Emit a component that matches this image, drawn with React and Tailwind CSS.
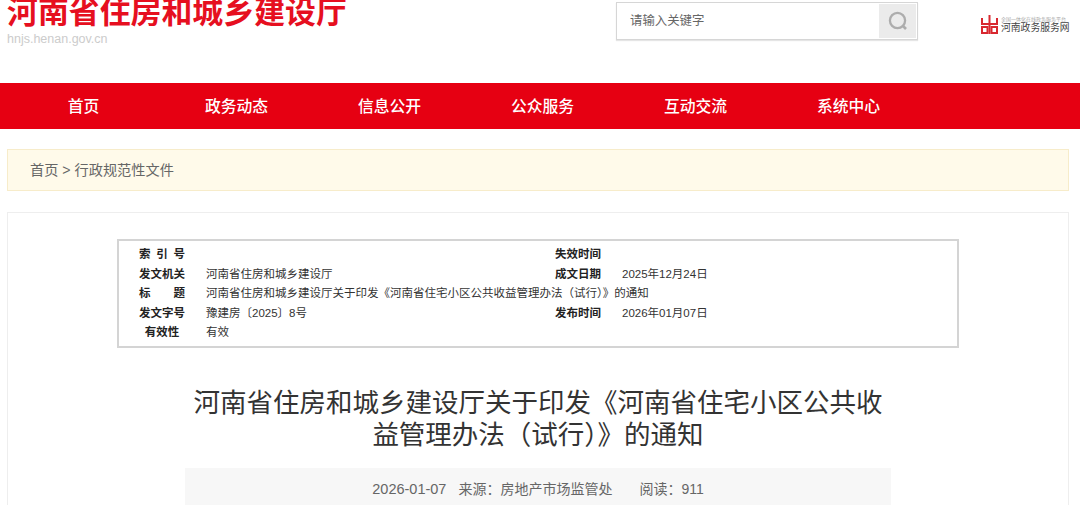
const fontStack = { fontFamily: '"Liberation Sans", "Noto Sans CJK SC", sans-serif' };

const navItems = ['首页', '政务动态', '信息公开', '公众服务', '互动交流', '系统中心'];

function InfoRow({ label, value, label2, value2, labelClass = 'justify-between' }) {
  return (
    <div className="flex h-[19.5px] items-center text-[11.5px] text-[#333]">
      <div className={`ml-[20px] flex w-[46px] font-bold text-[#222] ${labelClass}`}>{label}</div>
      <div className="ml-[21px] w-[349px] whitespace-nowrap">{value}</div>
      {label2 && <div className="w-[67px] font-bold text-[#222]">{label2}</div>}
      {value2 && <div>{value2}</div>}
    </div>
  );
}

function ServiceLogo() {
  return (
    <svg width="17" height="19" viewBox="0 0 17 19" fill="none" stroke="#d8282f" strokeWidth="2">
      <path d="M8.5 0V19" />
      <path d="M1 3V9H16V3" />
      <path d="M1 12H6.5V18H1Z" />
      <path d="M10.5 12H16V18H10.5Z" />
    </svg>
  );
}

export default function App() {
  return (
    <div className="h-[505px] w-[1080px] overflow-hidden bg-white" style={fontStack}>
      {/* Header */}
      <div className="flex h-[83px] items-start">
        <div className="ml-[7px] w-[609px]">
          <div className="mt-[-5px] whitespace-nowrap text-[30.9px] font-bold leading-[36px] text-[#e60f1f]">
            河南省住房和城乡建设厅
          </div>
          <div className="mt-[1px] text-[12.5px] leading-[14px] text-[#cccccc]">hnjs.henan.gov.cn</div>
        </div>
        <div className="mt-[2px] flex h-[38px] w-[302px] items-center border border-[#d6d6d6] p-[1px] shadow-[0_1px_1px_#e5e5e5]">
          <div className="flex-1 pl-[12px] text-[12.4px] text-[#666]">请输入关键字</div>
          <div className="flex h-[34px] w-[37px] items-center justify-center bg-[#ebebeb]">
            <svg width="20" height="20" viewBox="0 0 20 20" fill="none" stroke="#adadad" strokeWidth="2.3">
              <circle cx="9.5" cy="9.5" r="7.6" />
              <path d="M15 15L18 18" strokeWidth="2.6" />
            </svg>
          </div>
        </div>
        <div className="ml-[63px] mt-[15px] flex items-center gap-[3px]">
          <ServiceLogo />
          <div className="w-[68px] pt-[1px]">
            <div className="whitespace-nowrap text-[5px] leading-[6px] text-[#aaa]">全国一体化在线政务服务平台</div>
            <div className="whitespace-nowrap text-[9.8px] leading-[12px] text-[#444]">河南政务服务网</div>
          </div>
        </div>
      </div>

      {/* Nav */}
      <div className="flex h-[46px] items-center bg-[#e60012] pl-[7px] pt-[2px]">
        {navItems.map((item) => (
          <div key={item} className="w-[153px] text-center text-[15.8px] font-medium text-white">
            {item}
          </div>
        ))}
      </div>

      {/* Breadcrumb */}
      <div className="mx-[7px] mt-[20px] flex h-[42px] w-[1062px] items-center border border-[#f7ecca] bg-[#fffaea] pl-[22px] pt-[2px] text-[14.2px] text-[#666]">
        首页 &gt; 行政规范性文件
      </div>

      {/* Article card */}
      <div className="mx-[7px] mt-[21px] h-[400px] w-[1062px] border border-[#eeeeee] pt-[26px]">
        <div className="ml-[109px] w-[842px] border-2 border-[#d4d4d4] pb-[3px] pt-[4px]">
          <InfoRow label={<><span>索</span><span>引</span><span>号</span></>} value="" label2="失效时间" />
          <InfoRow label="发文机关" value="河南省住房和城乡建设厅" label2="成文日期" value2="2025年12月24日" />
          <InfoRow
            label={<><span>标</span><span>题</span></>}
            value="河南省住房和城乡建设厅关于印发《河南省住宅小区公共收益管理办法（试行）》的通知"
          />
          <InfoRow label="发文字号" value="豫建房〔2025〕8号" label2="发布时间" value2="2026年01月07日" />
          <InfoRow label="有效性" value="有效" labelClass="justify-center" />
        </div>

        <h1 className="mx-auto mt-[39px] w-[700px] text-center text-[26.5px] font-normal leading-[32px] text-[#333]">
          河南省住房和城乡建设厅关于印发《河南省住宅小区公共收益管理办法（试行）》的通知
        </h1>

        <div className="ml-[177px] mt-[17px] flex h-[44px] w-[706px] justify-center bg-[#f7f7f7] pt-[11px] text-[14px] leading-[20px] text-[#666]">
          <span className="text-[14.5px]">2026-01-07</span>
          <span className="ml-[12px]">来源：房地产市场监管处</span>
          <span className="ml-[27px]">阅读：911</span>
        </div>
      </div>
    </div>
  );
}
